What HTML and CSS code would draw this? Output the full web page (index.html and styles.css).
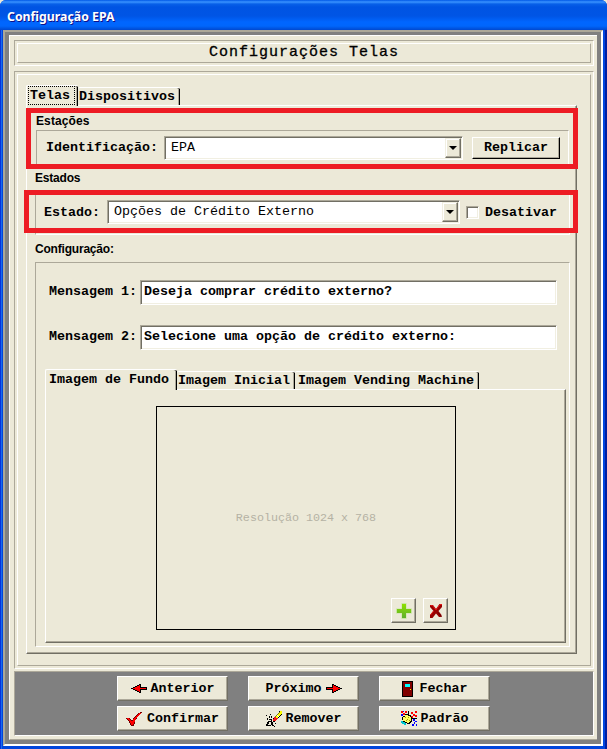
FILE: index.html
```html
<!DOCTYPE html>
<html lang="pt-BR">
<head>
<meta charset="utf-8">
<title>Configuração EPA</title>
<link rel="stylesheet" href="styles.css">
</head>
<body>
<div class="window">
  <header class="titlebar"><span>Configuração EPA</span></header>
  <div class="frame"><div class="client">
    <section class="panel heading"><h1 class="panel-inner">Configurações Telas</h1></section>
    <main class="panel content"><div class="panel-inner content-inner">
      <nav class="tabs main-tabs">
        <span class="tab active telas"><span class="focus">Telas</span></span><span class="tab disp">Dispositivos</span>
      </nav>
      <div class="page">
        <section class="group stations">
          <h2>Estações</h2>
          <div class="box row">
            <label>Identificação:</label>
            <div class="field combo"><span>EPA</span><i class="drop"></i></div>
            <button class="replicate">Replicar</button>
          </div>
        </section>
        <section class="group states">
          <h2>Estados</h2>
          <div class="box row">
            <label>Estado:</label>
            <div class="field combo"><span>Opções de Crédito Externo</span><i class="drop"></i></div>
            <i class="check"></i><label>Desativar</label>
          </div>
        </section>
        <section class="group config">
          <h2>Configuração:</h2>
          <div class="box">
            <div class="message"><label>Mensagem 1:</label><div class="field">Deseja comprar crédito externo?</div></div>
            <div class="message"><label>Mensagem 2:</label><div class="field">Selecione uma opção de crédito externo:</div></div>
            <nav class="tabs image-tabs">
              <span class="tab active fundo">Imagem de Fundo</span><span class="tab inicial">Imagem Inicial</span><span class="tab vending">Imagem Vending Machine</span>
            </nav>
            <div class="image-page">
              <div class="preview">
                <span class="resolution">Resolução 1024 x 768</span>
                <div class="tools">
                  <button class="tool"><svg width="16" height="16" viewBox="0 0 16 16"><defs><linearGradient id="g" x1="0" y1="0" x2="0" y2="1"><stop offset="0" stop-color="#8ee000"/><stop offset="1" stop-color="#5fae2e"/></linearGradient></defs><path d="M5.5 0h5v5.500h5.500v5h-5.500V16h-5v-5.500H0v-5h5.500z" fill="#c8e6a0"/><path d="M6 1h4v5h5v4h-5v5H6v-5H1V6h5z" fill="url(#g)"/></svg></button>
                  <button class="tool"><svg width="14" height="16" viewBox="0 0 14 16"><path d="M1 2h3l3 4 3.500-5H13v3L9.500 8l3 4v2H10L7 10.500 3.500 15H1v-3l3.500-4L1 4z" fill="#980000"/><path d="M1.500 2.500h2L7 7l4-5.500h2M4.500 8L1.500 12" fill="none" stroke="#e51515"/><path d="M9 9.500l3.500 4" stroke="#620000"/></svg></button>
                </div>
              </div>
            </div>
          </div>
        </section>
        <div class="highlight highlight-stations"></div>
        <div class="highlight highlight-states"></div>
      </div>
    </div></main>
    <footer class="actions">
      <button class="action"><svg width="16" height="9" viewBox="0 0 16 9" shape-rendering="crispEdges"><path d="M0 4h2V3h2V2h2V1h2V0h2v3h6v3h-6v3H8V8H6V7H4V6H2V5H0z"/><path d="M2 4h2V3h2V2h2V1h1v3h6v1H9v3H8V7H6V6H4V5H2z" fill="red"/></svg>Anterior</button>
      <button class="action">Próximo<svg width="16" height="9" viewBox="0 0 16 9" shape-rendering="crispEdges"><g transform="translate(16 0) scale(-1 1)"><path d="M0 4h2V3h2V2h2V1h2V0h2v3h6v3h-6v3H8V8H6V7H4V6H2V5H0z"/><path d="M2 4h2V3h2V2h2V1h1v3h6v1H9v3H8V7H6V6H4V5H2z" fill="red"/></g></svg></button>
      <button class="action"><svg class="door" width="12" height="16" viewBox="0 0 12 16" shape-rendering="crispEdges"><path d="M0 0h11v16H0z"/><path d="M1 1h9v14H1z" fill="#800000"/><path d="M3 3h5v3H3z" fill="#00ffff"/><path d="M8 8h1v1H8z" fill="#ff0"/></svg>Fechar</button>
      <button class="action confirm"><svg width="17" height="14" viewBox="0 0 17 14" shape-rendering="crispEdges"><path d="M0 6h4v1h1v1h2V6h1V5h1V4h1V3h1V2h1V1h2V0h2v1h-1v1h-1v1h-1v1h-1v1h-1v2h-1v1h-1v2H9v2H8v2H5v-1H4v-2H3V9H2V8H1V7H0z" fill="#700000"/><path d="M1 6h2v1h1v1h1v1h2V7h1V6h1V5h1V4h1V3h1V2h1V1h2v1h-1v1h-1v1h-1v1h-1v1h-1v2H9v2H8v2H7v1H5v-2H4V9H3V8H2V7H1z" fill="red"/></svg>Confirmar</button>
      <button class="action"><svg class="eraser" width="16" height="16" viewBox="0 0 16 16" shape-rendering="crispEdges"><path d="M13 0h3v4h-1v1h-1v1h-1v1h-1v1h-1v1h-1v1H9v1H7V7h1V6h1V5h1V4h1V3h1V2h1z"/><path d="M13 1h1v2h-1v1h-1v1h-1v1h-1v1H9V5h1V4h1V3h1V2h1z" fill="#808000"/><path d="M14 0h2v3h-1v1h-1v1h-1v1h-1v1h-2V5h1V4h1V3h1V2h1z" fill="#ff0"/><path d="M11 4h1v1h1v1h-1V5h-1z" fill="#fff"/><path d="M8 6h2v1h2v1h-1v1h-1v1H7V8h1z" fill="#f01818"/><path d="M4 3h1v1H4zM3 5h1v2H3zM5 5h1v2H5zM1 7h1v2H1zM3 8h2v1H3zM5 8h1v3H5zM2 10h3v1H2zM1 11h2v2H1zM0 13h2v2H0zM2 14h3v1H2zM5 11h2v3H5zM6 14h2v1H6zM9 12h1v1H9zM8 15h1v1H8zM0 4h1v1H0z"/></svg>Remover</button>
      <button class="action"><svg class="hand" width="16" height="15" viewBox="0 0 16 15" shape-rendering="crispEdges"><path d="M0 0h2v2H0zM4 0h2v2H4zM2 2h2v2H2zM10 1h2v2h-2zM14 0h2v2h-2zM12 3h2v2h-2zM10 5h2v2h-2zM14 4h2v2h-2z" fill="red"/><path d="M0 3h2v2H0zM12 8h2v2h-2zM14 10h2v1h-2zM11 13h2v2h-2zM13 11h1v2h-1zM15 13h1v2h-1zM2 0h1v1H2z" fill="#00f"/><path d="M7 0h1v4H7zM10 7h6v1h-6zM4 3h3v1h3v2h1v5h-1v1H9v1H6v-1H4v-1H2V9H1V6h1V5h2z"/><path d="M4 4h3v1h2v1h1v4H9v1H8v1H6v-1H4v-1H2V6h2z" fill="#ffff60"/><path d="M4 6h1v1H4zM7 6h1v1H7zM6 8h1v1H6zM8 9h1v1H8zM5 9h1v1H5z" fill="#a0a000"/><path d="M0 10h2v1h2v1h1v2H3v-1H1v-1H0z" fill="#00c8d0"/></svg>Padrão</button>
    </footer>
  </div></div>
</div>
</body>
</html>
```
FILE: styles.css
```css
* { box-sizing: border-box; }
body {
  margin: 0;
  width: 607px;
  height: 749px;
  overflow: hidden;
  background: #ece9d8;
  color: #000;
  font: bold 13.333px/16px "Liberation Mono", monospace;
}
h1, h2 { margin: 0; }
button { font: inherit; color: inherit; padding: 0; margin: 0; border-radius: 0; background: #ece9d8; }
svg { display: block; flex: none; }
label { white-space: pre; }

.window {
  height: 749px;
  border-radius: 6px 6px 0 0;
  background: linear-gradient(to right, #0831d9 0 1px, #166aee 1px 2px, #0045dc 2px 3px, #0045dc 3px 603px, #0046e0 603px 605px, #001ea0 605px);
}
.titlebar {
  height: 30px;
  padding: 9px 7px 0;
  border-radius: 6px 6px 0 0;
  background: linear-gradient(#0058e6 0, #3a93ff 2px, #0860e8 4px, #0054e3 7px, #0055e5 16px, #0066ff 22px, #0066fc 26px, #0048cf 30px);
  color: #fff;
  font: bold 12.5px/16px "Noto Sans", sans-serif;
  text-shadow: 1px 1px #0f1089;
  white-space: nowrap;
}
.titlebar span { display: inline-block; transform: scaleX(.985); transform-origin: left; }

.frame {
  height: 716px;
  margin: 0 4px 0 3px;
  padding: 3px 4px 4px;
  background: #808080;
  border: solid #aca899;
  border-width: 2px;
  border-right-color: #fff;
  border-bottom-color: #fff;
}
.client {
  height: 705px;
  padding: 4px 3px 3px 4px;
  border: 1px solid #fff;
  border-right: 0;
  border-bottom: 1px solid #aca899;
  background: #ece9d8;
}
.panel { width: 580px; padding: 2px; border: 1px solid; border-color: #aca899 #fff #fff #aca899; }
.panel-inner { height: 100%; border: 1px solid; border-color: #fff #aca899 #aca899 #fff; }
.heading { height: 26px; }
.heading h1 { font: 15px/17px "Liberation Mono", monospace; letter-spacing: 1px; text-align: center; -webkit-text-stroke: .3px #000; }
.content { height: 598px; margin-top: 5px; }
.content-inner { padding: 10px 0 0 8px; }

.tabs { display: flex; align-items: flex-end; }
.tab {
  height: 18px;
  border: solid #fff;
  border-width: 1px 0 0;
  border-radius: 2px 2px 0 0;
  white-space: nowrap;
  position: relative;
  box-shadow: inset -1px 0 #000, inset -2px 0 #aca899;
}
.tab.active { z-index: 1; height: 21px; margin-bottom: -1px; border-left-width: 1px; background: #ece9d8; }
.main-tabs { height: 20px; }
.telas { width: 52px; padding: 0 1px; }
.focus { display: block; width: 47px; height: 19px; border: 1px dotted #000; padding: 1px 0 0 1px; }
.disp { width: 102px; padding: 1px 0 0 1px; }
.page {
  position: relative;
  width: 551px;
  height: 549px;
  padding: 8px 0 0;
  border: 1px solid;
  border-color: #fff #716f64 #716f64 #fff;
  box-shadow: inset -1px -1px #aca899;
}
.group h2 { font: bold 12px/15px "Liberation Sans", sans-serif; }
.box { border: 1px solid; border-color: #aca899 #fff #fff #aca899; }
.row { display: flex; align-items: flex-start; }
.stations { width: 533px; margin-left: 9px; }
.stations h2 { height: 16px; letter-spacing: .1px; }
.stations .box { height: 38px; padding: 5px 0 0 9px; }
.stations label { width: 118px; padding-top: 4px; }
.stations .combo { width: 299px; }
.replicate { width: 88px; height: 22px; margin: 1px 0 0 9px; border: 1px solid; border-color: #fff #000 #000 #fff; box-shadow: inset -1px -1px #aca899; }
.states { width: 535px; margin: 3px 0 0 8px; }
.states h2 { height: 20px; letter-spacing: -.2px; }
.states .box { height: 44px; padding: 8px 0 0 8px; }
.states label { padding-top: 5px; }
.states label:first-child { width: 63px; }
.states .combo { width: 353px; }
.check { width: 13px; height: 13px; margin: 6px 6px 0; }
.field, .check {
  background: #fff;
  border: 1px solid;
  border-color: #aca899 #fff #fff #aca899;
  box-shadow: inset 1px 1px #716f64, inset -1px -1px #f1efe2;
}
.combo { display: flex; justify-content: space-between; height: 24px; padding: 1px; font-weight: normal; }
.combo span { padding: 2px 0 0 5px; }
.drop { display: flex; align-items: center; justify-content: center; width: 16px; height: 20px; background: #ece9d8; border: 1px solid; border-color: #f1efe2 #716f64 #716f64 #f1efe2; box-shadow: inset -1px -1px #aca899, inset 1px 1px #fff; }
.drop::before { content: ""; border: 4px solid transparent; border-top-color: #000; border-bottom: 0; }

.config { width: 535px; margin: 6px 0 0 8px; }
.config h2 { height: 21px; letter-spacing: -.2px; padding-top: 1px; }
.config > .box { height: 385px; padding: 17px 0 0 9px; }
.message { display: flex; height: 45px; }
.message label { width: 95px; padding: 4px 0 0 4px; }
.message .field { width: 417px; height: 25px; padding: 3px 0 0 3px; }
.image-tabs { height: 19px; }
.fundo { width: 132px; height: 22px; padding: 2px 0 0 3px; }
.inicial { width: 118px; padding: 1px 0 0 1px; }
.vending { width: 184px; padding: 1px 0 0 3px; }
.image-page {
  width: 521px;
  height: 254px;
  padding: 16px 0 0 110px;
  border: 1px solid;
  border-color: #fff #716f64 #716f64 #fff;
  box-shadow: inset -1px -1px #aca899;
}
.preview { display: flex; flex-direction: column; width: 300px; height: 224px; padding: 103px 7px 6px; border: 1px solid #000; color: #b5b2a4; font: 11.7px/16px "Liberation Mono", monospace; }
.resolution { text-align: center; }
.tools { display: flex; justify-content: flex-end; gap: 7px; margin-top: auto; }
.tool { display: flex; align-items: center; justify-content: center; width: 25px; height: 25px; border: 1px solid; border-color: #fff #716f64 #716f64 #fff; box-shadow: inset -1px -1px #aca899; }

.actions {
  display: grid;
  grid-template-columns: repeat(3, 111px);
  grid-auto-rows: 25px;
  gap: 5px 20px;
  height: 65px;
  width: 580px;
  margin-top: 2px;
  padding: 4px 0 0 102px;
  background: #808080;
  border: 1px solid;
  border-color: #aca899 #fff #fff #aca899;
}
.action { display: flex; align-items: center; justify-content: center; gap: 4px; border: 1px solid; border-color: #fff #716f64 #716f64 #fff; box-shadow: inset -1px -1px #aca899; }
.door { margin-right: 2px; }
.highlight { position: absolute; border: 5px solid #ed1c24; }
.highlight-stations { left: -1px; top: 2px; width: 552px; height: 61px; }
.highlight-states { left: -3px; top: 84px; width: 554px; height: 43px; }
```
